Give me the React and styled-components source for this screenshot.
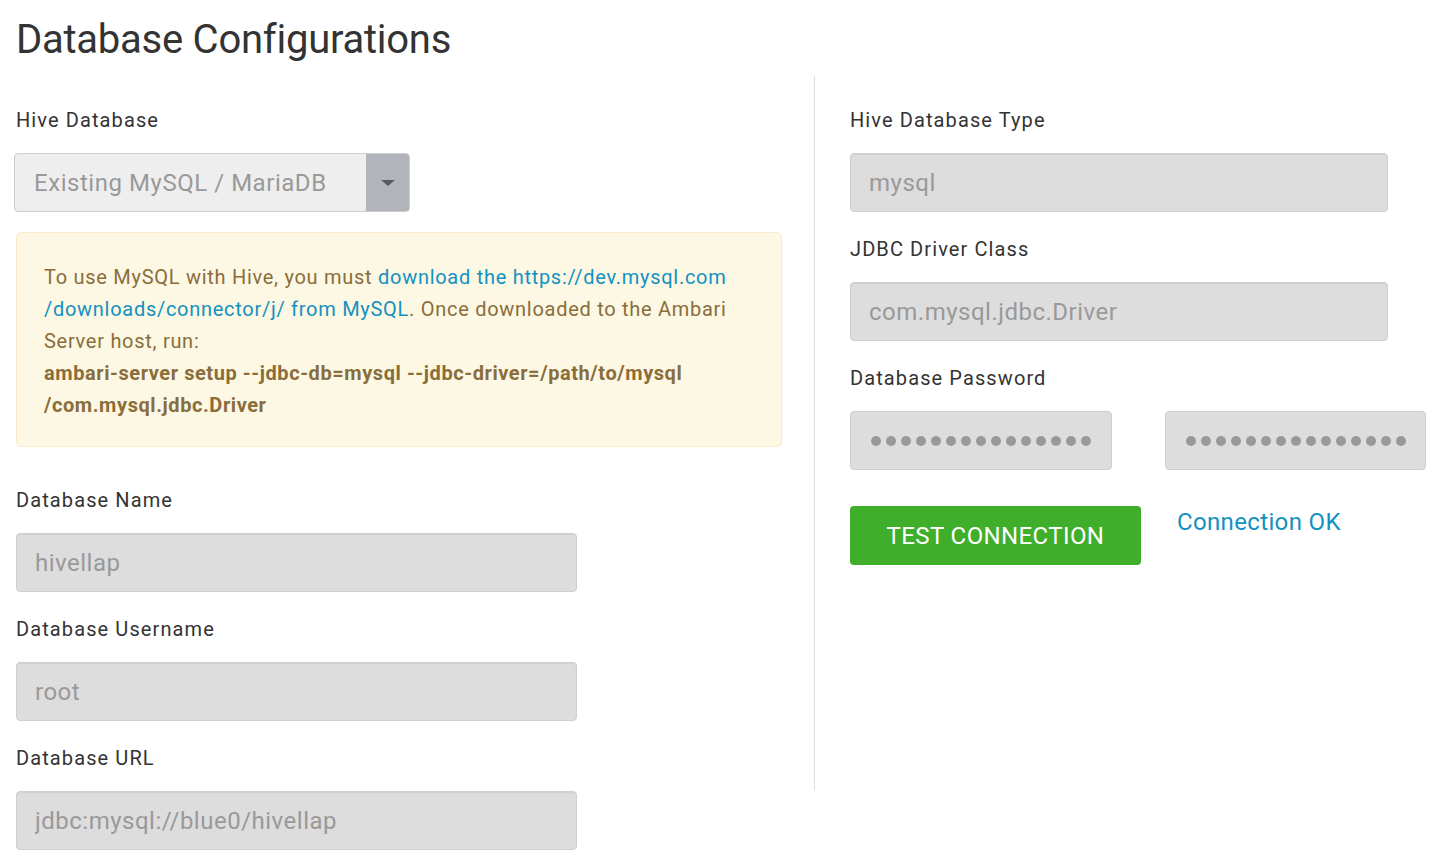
import React from 'react';
import styled, { createGlobalStyle } from 'styled-components';

const COLORS = {
  text: '#333333',
  muted: '#999999',
  inputBg: '#dddddd',
  inputBorder: '#cfcfcf',
  selectBg: '#eeeeee',
  caretBg: '#b1b4ba',
  warnBg: '#fcf8e3',
  warnBorder: '#faebcc',
  warnText: '#8a6d3b',
  link: '#1491c1',
  success: '#3fae2a',
  divider: '#dddddd',
};

const GlobalStyle = createGlobalStyle`
  body {
    margin: 0;
    background: #fff;
    font-family: Roboto, "Liberation Sans", sans-serif;
    color: ${COLORS.text};
  }
  * { box-sizing: border-box; }
`;

const Page = styled.div`
  padding: 0 16px;
`;

const Title = styled.h1`
  margin: 16px 0 0;
  font-size: 40px;
  line-height: 48px;
  font-weight: 400;
  letter-spacing: -0.25px;
  color: ${COLORS.text};
`;

const Columns = styled.div`
  display: flex;
  align-items: flex-start;
  margin-top: 12px;
`;

const Column = styled.div`
  width: ${p => p.width}px;
  padding-top: 30px;
  flex-shrink: 0;
`;

const Divider = styled.div`
  width: 1px;
  height: 714px;
  margin: 0 35px 0 32px;
  background: ${COLORS.divider};
  flex-shrink: 0;
`;

const Field = styled.div`
  margin-bottom: 23px;
`;

const Label = styled.label`
  display: block;
  font-size: 20px;
  line-height: 28px;
  letter-spacing: 1.1px;
  margin-bottom: 19px;
  color: ${COLORS.text};
`;

const Input = styled.input`
  display: block;
  width: ${p => p.width}px;
  height: 59px;
  padding: 0 18px;
  border: 1px solid ${COLORS.inputBorder};
  border-radius: 4px;
  background: ${COLORS.inputBg};
  box-shadow: inset 0 1px 1px rgba(0, 0, 0, 0.06);
  font-family: inherit;
  font-size: 24px;
  letter-spacing: 0.5px;
  color: ${COLORS.muted};
  outline: none;
`;

const Select = styled.div`
  display: flex;
  width: 396px;
  height: 59px;
  margin-left: -2px;
  border: 1px solid #cccccc;
  border-radius: 4px;
  overflow: hidden;
  background: ${COLORS.selectBg};
`;

const SelectValue = styled.div`
  flex: 1;
  display: flex;
  align-items: center;
  padding-left: 19px;
  font-size: 24px;
  letter-spacing: 0.54px;
  color: ${COLORS.muted};
`;

const Caret = styled.div`
  width: 43px;
  display: flex;
  align-items: center;
  justify-content: center;
  background: ${COLORS.caretBg};
  &::after {
    content: '';
    border-left: 7px solid transparent;
    border-right: 7px solid transparent;
    border-top: 6px solid #5a5a5a;
  }
`;

const Alert = styled.div`
  margin: 20px 0 39px;
  padding: 28px 27px 25px;
  border: 1px solid ${COLORS.warnBorder};
  border-radius: 5px;
  background: ${COLORS.warnBg};
  color: ${COLORS.warnText};
  font-size: 20px;
  line-height: 32px;
  letter-spacing: 0.72px;
`;

const Link = styled.a`
  color: ${COLORS.link};
  text-decoration: none;
`;

const Command = styled.strong`
  display: block;
  font-weight: 700;
  letter-spacing: 0.57px;
`;

const PasswordRow = styled.div`
  display: flex;
  gap: 53px;
`;

const PasswordBox = styled.div`
  width: ${p => p.width}px;
  height: 59px;
  display: flex;
  align-items: center;
  gap: 5px;
  padding-left: 20px;
  border: 1px solid ${COLORS.inputBorder};
  border-radius: 4px;
  background: ${COLORS.inputBg};
`;

const Dot = styled.span`
  width: 10px;
  height: 10px;
  margin-top: 1px;
  border-radius: 50%;
  background: ${COLORS.muted};
`;

const Actions = styled.div`
  display: flex;
  align-items: flex-start;
  gap: 36px;
  margin-top: 36px;
`;

const Button = styled.button`
  width: 291px;
  height: 59px;
  border: none;
  border-radius: 4px;
  background: ${COLORS.success};
  color: #fff;
  font-family: inherit;
  font-size: 24px;
  letter-spacing: 0.4px;
  text-transform: uppercase;
`;

const Status = styled.span`
  font-size: 24px;
  line-height: 32px;
  letter-spacing: 0.35px;
  color: ${COLORS.link};
`;

const Password = ({ width }) => (
  <PasswordBox width={width}>
    {Array.from({ length: 15 }).map((_, i) => <Dot key={i} />)}
  </PasswordBox>
);

const TextField = ({ label, value, width }) => (
  <Field>
    <Label>{label}</Label>
    <Input readOnly value={value} width={width} />
  </Field>
);

export default function App() {
  return (
    <Page>
      <GlobalStyle />
      <Title>Database Configurations</Title>
      <Columns>
        <Column width={766}>
          <Label>Hive Database</Label>
          <Select>
            <SelectValue>Existing MySQL / MariaDB</SelectValue>
            <Caret />
          </Select>
          <Alert>
            To use MySQL with Hive, you must{' '}
            <Link href="#">download the https://dev.mysql.com<wbr />/downloads/connector/j/ from MySQL</Link>.
            Once downloaded to the Ambari Server host, run:
            <Command>ambari-server setup --jdbc-db=mysql --jdbc-driver=/path/to/mysql<wbr />/com.mysql.jdbc.Driver</Command>
          </Alert>
          <TextField label="Database Name" value="hivellap" width={561} />
          <TextField label="Database Username" value="root" width={561} />
          <TextField label="Database URL" value="jdbc:mysql://blue0/hivellap" width={561} />
        </Column>
        <Divider />
        <Column width={576}>
          <TextField label="Hive Database Type" value="mysql" width={538} />
          <TextField label="JDBC Driver Class" value="com.mysql.jdbc.Driver" width={538} />
          <Label>Database Password</Label>
          <PasswordRow>
            <Password width={262} />
            <Password width={261} />
          </PasswordRow>
          <Actions>
            <Button>Test Connection</Button>
            <Status>Connection OK</Status>
          </Actions>
        </Column>
      </Columns>
    </Page>
  );
}
